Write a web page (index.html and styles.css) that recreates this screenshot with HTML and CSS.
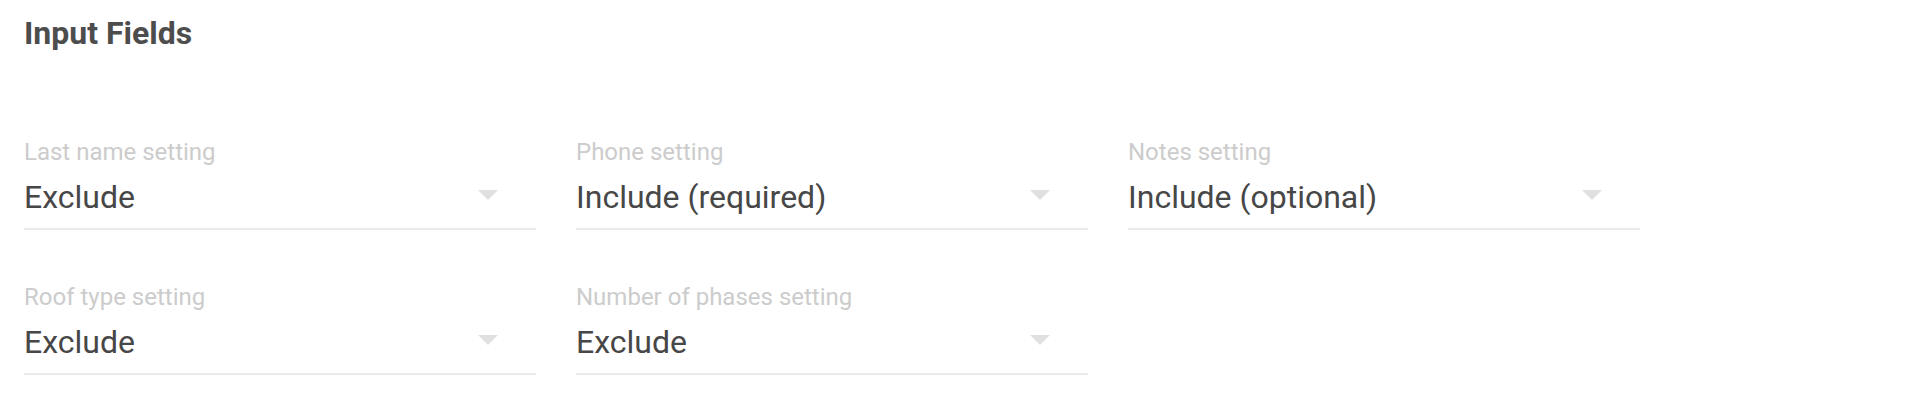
FILE: index.html
```html
<!DOCTYPE html>
<html>
<head>
<meta charset="utf-8">
<link rel="stylesheet" href="styles.css">
</head>
<body>
<div class="page">
  <h1 class="title">Input Fields</h1>
  <div class="grid">
    <div class="field">
      <div class="label">Last name setting</div>
      <div class="value">Exclude</div>
      <svg class="arrow" viewBox="0 0 20 10"><path d="M0 0L10 10L20 0Z"/></svg>
    </div>
    <div class="field">
      <div class="label">Phone setting</div>
      <div class="value">Include (required)</div>
      <svg class="arrow" viewBox="0 0 20 10"><path d="M0 0L10 10L20 0Z"/></svg>
    </div>
    <div class="field">
      <div class="label">Notes setting</div>
      <div class="value">Include (optional)</div>
      <svg class="arrow" viewBox="0 0 20 10"><path d="M0 0L10 10L20 0Z"/></svg>
    </div>
    <div class="field">
      <div class="label">Roof type setting</div>
      <div class="value">Exclude</div>
      <svg class="arrow" viewBox="0 0 20 10"><path d="M0 0L10 10L20 0Z"/></svg>
    </div>
    <div class="field">
      <div class="label">Number of phases setting</div>
      <div class="value">Exclude</div>
      <svg class="arrow" viewBox="0 0 20 10"><path d="M0 0L10 10L20 0Z"/></svg>
    </div>
  </div>
</div>
</body>
</html>
```
FILE: styles.css
```css
html, body {
  margin: 0;
  padding: 0;
  background: #ffffff;
}
body {
  font-family: Roboto, "Liberation Sans", sans-serif;
}
.page {
  padding: 13px 24px 0 24px;
}
.title {
  margin: 0 0 85px 0;
  font-size: 32px;
  line-height: 40px;
  font-weight: 700;
  color: #4d4d4d;
}
.grid {
  display: grid;
  grid-template-columns: repeat(3, 512px);
  column-gap: 40px;
  row-gap: 53px;
}
.field {
  position: relative;
  display: flex;
  flex-direction: column;
  padding-bottom: 11px;
  border-bottom: 2px solid #ebebeb;
}
.label {
  font-size: 24px;
  line-height: 28px;
  color: #cccccc;
  margin-bottom: 11px;
}
.value {
  font-size: 32px;
  line-height: 40px;
  color: #474747;
}
.arrow {
  position: absolute;
  right: 38px;
  top: 52px;
  width: 20px;
  height: 10px;
  fill: #e0e0e0;
}
```
